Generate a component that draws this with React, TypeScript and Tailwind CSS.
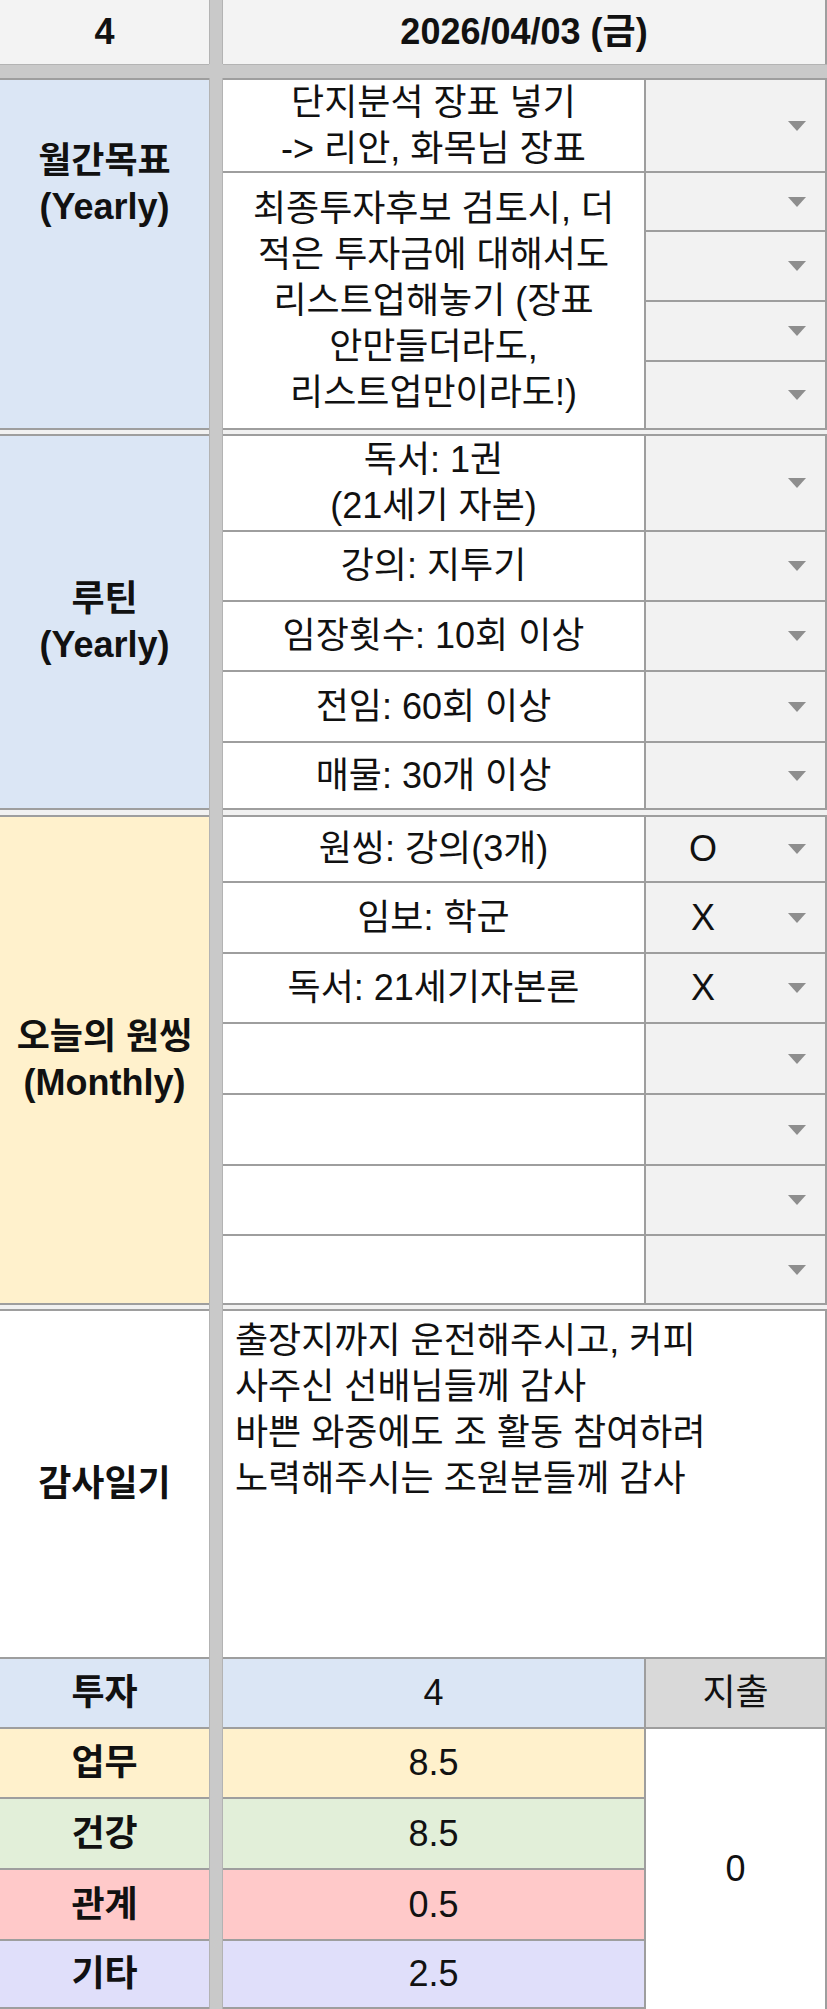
import React from 'react';

const Arrow = () => (
  <svg width="18" height="10" viewBox="0 0 18 10">
    <path d="M0 0H18L9 10Z" fill="#8e8e8e" />
  </svg>
);

const Band = () => <div className="w-[14px] shrink-0 bg-[#c9c9c9] border-x border-[#b3b3b3]" />;

const Sep = ({ h }: { h: string }) => (
  <div className={`flex ${h}`}>
    <div className="w-[209px] shrink-0 bg-[#f1f1f1]" />
    <Band />
    <div className="flex-1 bg-[#f1f1f1]" />
  </div>
);

// dropdown cell in the right column
const Pick = ({ mark, cls }: { mark?: string; cls: string }) => (
  <div className={`flex items-center bg-[#f2f2f2] border-[#9e9e9e] ${cls}`}>
    <span className="w-[114px] text-center">{mark}</span>
    <span className="ml-auto mr-[19px] flex">
      <Arrow />
    </span>
  </div>
);

const Row = ({ text, mark, cls }: { text?: React.ReactNode; mark?: string; cls: string }) => (
  <div className={`flex border-[#9e9e9e] ${cls}`}>
    <div className="w-[423px] shrink-0 flex items-center justify-center text-center bg-white border-r-2 border-[#9e9e9e]">
      <div>{text}</div>
    </div>
    <Pick mark={mark} cls="flex-1" />
  </div>
);

const Block = ({
  label,
  bg,
  h,
  labelCls = 'justify-center',
  children,
}: {
  label: React.ReactNode;
  bg: string;
  h: string;
  labelCls?: string;
  children: React.ReactNode;
}) => (
  <div className={`flex ${h}`}>
    <div
      className={`w-[209px] shrink-0 flex flex-col items-center text-center font-bold border-y-2 border-[#9e9e9e] ${bg} ${labelCls}`}
    >
      {label}
    </div>
    <Band />
    <div className="flex-1 flex flex-col border-y-2 border-r-2 border-[#9e9e9e]">{children}</div>
  </div>
);

const stats = [
  { label: '투자', value: '4', bg: 'bg-[#dbe6f5]', h: 'h-[70px]' },
  { label: '업무', value: '8.5', bg: 'bg-[#fff1cc]', h: 'h-[70px]' },
  { label: '건강', value: '8.5', bg: 'bg-[#e2efd9]', h: 'h-[71px]' },
  { label: '관계', value: '0.5', bg: 'bg-[#ffc9c9]', h: 'h-[71px]' },
  { label: '기타', value: '2.5', bg: 'bg-[#e0dffa]', h: 'flex-1' },
];

export default function App() {
  return (
    <div className="w-[827px] h-[2009px] overflow-hidden bg-white text-[#111] text-[36px] leading-[46px] font-['Liberation_Sans','Noto_Sans_CJK_KR',sans-serif]">
      {/* header */}
      <div className="flex h-[64px]">
        <div className="w-[209px] shrink-0 flex items-center justify-center bg-[#f3f3f3] font-bold">4</div>
        <Band />
        <div className="flex-1 flex items-center justify-center bg-[#f3f3f3] font-bold border-r-2 border-[#9e9e9e]">
          2026/04/03 (금)
        </div>
      </div>
      <div className="flex h-[14px]">
        <div className="w-[209px] shrink-0 bg-[#c9c9c9] border-t border-[#b3b3b3]" />
        <div className="w-[14px] shrink-0 bg-[#c9c9c9]" />
        <div className="flex-1 bg-[#c9c9c9] border-t border-[#b3b3b3]" />
      </div>

      <Block
        h="h-[352px]"
        bg="bg-[#dbe6f5]"
        labelCls="justify-start pt-[58px]"
        label={
          <>
            <div>월간목표</div>
            <div>(Yearly)</div>
          </>
        }
      >
        <Row
          cls="h-[93px] border-b-2"
          text={
            <>
              단지분석 장표 넣기
              <br />
              -&gt; 리안, 화목님 장표
            </>
          }
        />
        <div className="flex flex-1">
          <div className="w-[423px] shrink-0 flex items-center justify-center text-center bg-white border-r-2 border-[#9e9e9e]">
            <div>
              최종투자후보 검토시, 더
              <br />
              적은 투자금에 대해서도
              <br />
              리스트업해놓기 (장표
              <br />
              안만들더라도,
              <br />
              리스트업만이라도!)
            </div>
          </div>
          <div className="flex-1 flex flex-col">
            <Pick cls="h-[59px] border-b-2" />
            <Pick cls="h-[70px] border-b-2" />
            <Pick cls="h-[60px] border-b-2" />
            <Pick cls="flex-1" />
          </div>
        </div>
      </Block>

      <Sep h="h-[4px]" />

      <Block
        h="h-[376px]"
        bg="bg-[#dbe6f5]"
        label={
          <>
            <div>루틴</div>
            <div>(Yearly)</div>
          </>
        }
      >
        <Row
          cls="h-[96px] border-b-2"
          text={
            <>
              독서: 1권
              <br />
              (21세기 자본)
            </>
          }
        />
        <Row cls="h-[70px] border-b-2" text="강의: 지투기" />
        <Row cls="h-[70px] border-b-2" text="임장횟수: 10회 이상" />
        <Row cls="h-[71px] border-b-2" text="전임: 60회 이상" />
        <Row cls="flex-1" text="매물: 30개 이상" />
      </Block>

      <Sep h="h-[5px]" />

      <Block
        h="h-[490px]"
        bg="bg-[#fff1cc]"
        label={
          <>
            <div>오늘의 원씽</div>
            <div>(Monthly)</div>
          </>
        }
      >
        <Row cls="h-[66px] border-b-2" text="원씽: 강의(3개)" mark="O" />
        <Row cls="h-[71px] border-b-2" text="임보: 학군" mark="X" />
        <Row cls="h-[70px] border-b-2" text="독서: 21세기자본론" mark="X" />
        <Row cls="h-[71px] border-b-2" />
        <Row cls="h-[71px] border-b-2" />
        <Row cls="h-[70px] border-b-2" />
        <Row cls="flex-1" />
      </Block>

      <Sep h="h-[4px]" />

      <Block h="h-[350px]" bg="bg-white" label={<div>감사일기</div>}>
        <div className="flex-1 bg-white pl-[12px] pt-[7px] text-left">
          출장지까지 운전해주시고, 커피
          <br />
          사주신 선배님들께 감사
          <br />
          바쁜 와중에도 조 활동 참여하려
          <br />
          노력해주시는 조원분들께 감사
        </div>
      </Block>

      {/* totals */}
      <div className="flex h-[350px]">
        <div className="w-[209px] shrink-0 flex flex-col">
          {stats.map((s) => (
            <div
              key={s.label}
              className={`${s.h} ${s.bg} flex items-center justify-center font-bold border-b-2 border-[#9e9e9e]`}
            >
              {s.label}
            </div>
          ))}
        </div>
        <Band />
        <div className="flex-1 flex border-r-2 border-[#9e9e9e]">
          <div className="w-[423px] shrink-0 flex flex-col border-r-2 border-[#9e9e9e]">
            {stats.map((s) => (
              <div
                key={s.label}
                className={`${s.h} ${s.bg} flex items-center justify-center border-b-2 border-[#9e9e9e]`}
              >
                {s.value}
              </div>
            ))}
          </div>
          <div className="flex-1 flex flex-col">
            <div className="h-[70px] flex items-center justify-center bg-[#d9d9d9] border-b-2 border-[#9e9e9e]">
              지출
            </div>
            <div className="flex-1 flex items-center justify-center bg-white">0</div>
          </div>
        </div>
      </div>
    </div>
  );
}
